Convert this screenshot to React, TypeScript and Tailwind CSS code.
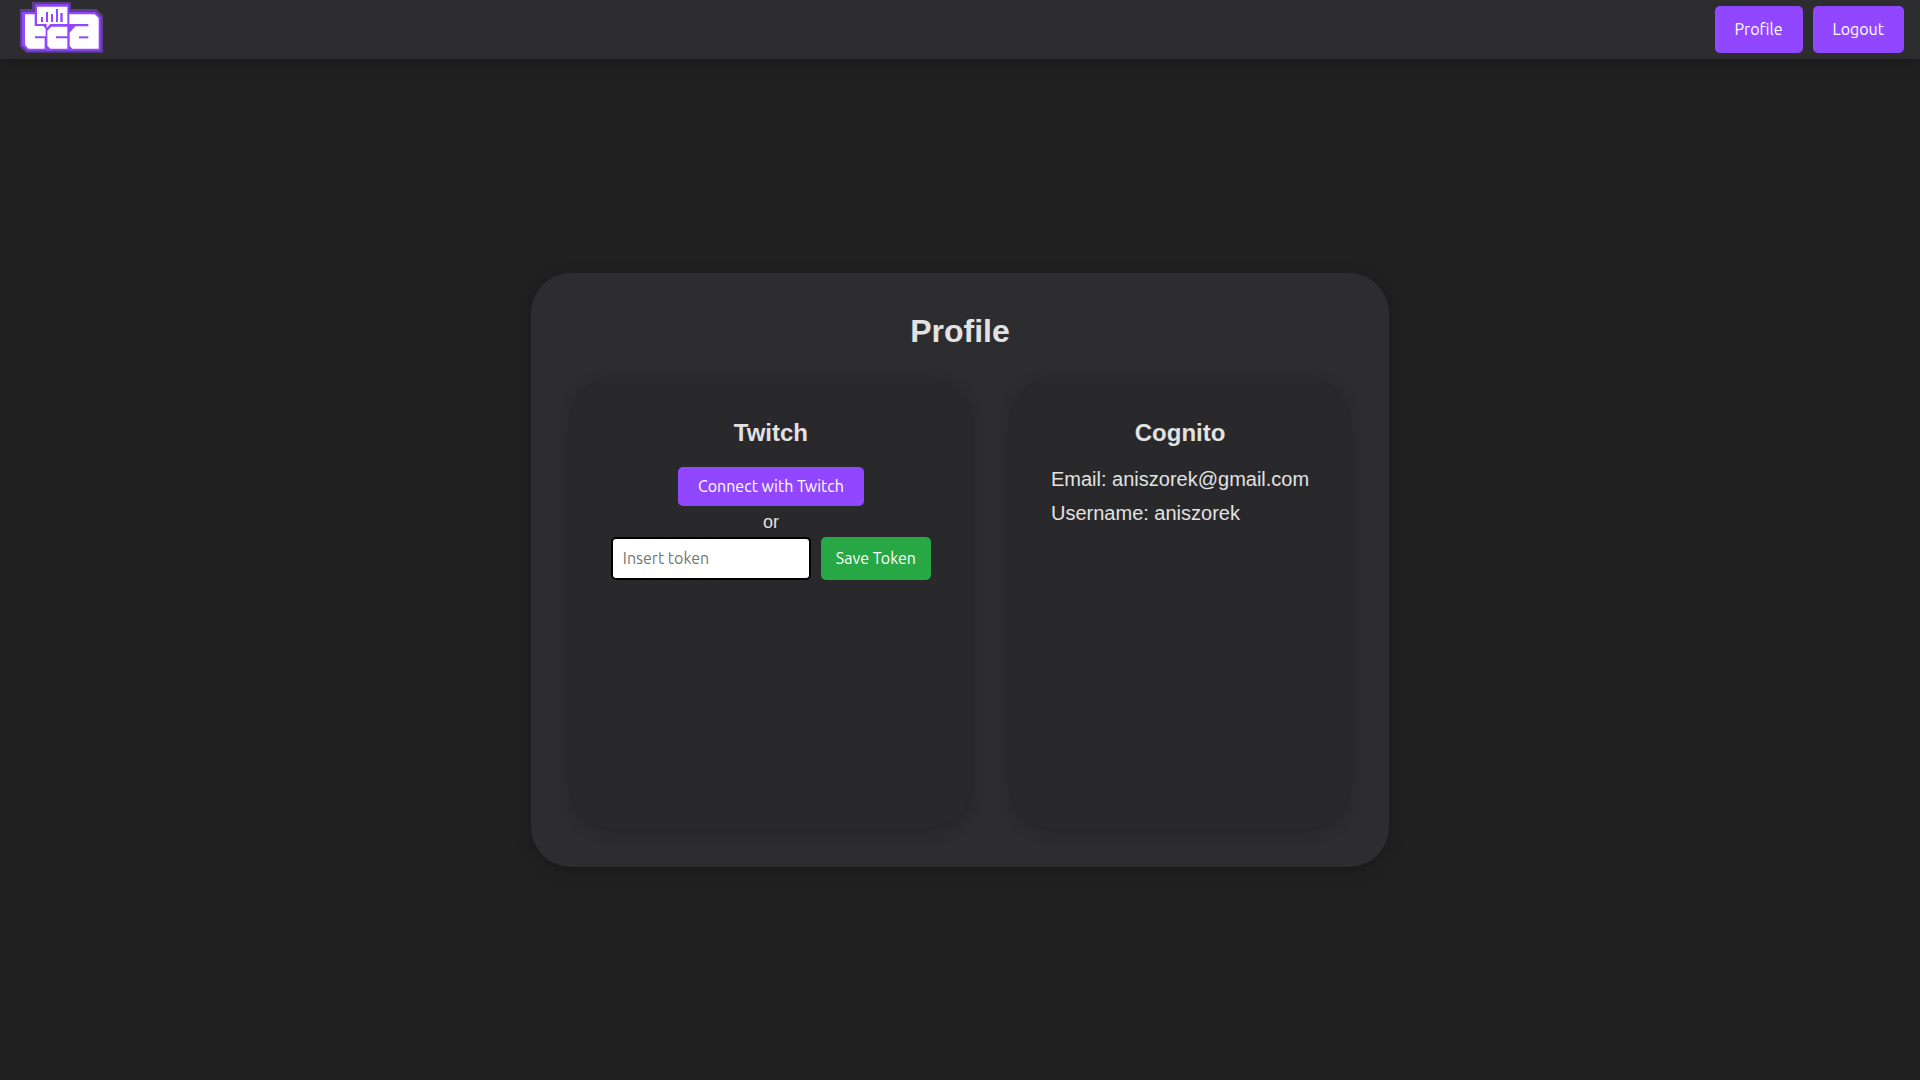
import React from "react";

function Logo() {
  return (
    <svg viewBox="60 6 249 153" className="h-[51px] w-[83px]" role="img" aria-label="tca">
      <path fill="#5c3d8f" d="M60 27H96V6H213V27H290L309 47V158H78L60 140Z" />
      <path fill="#9147ff" d="M66 36H105V13H207V36H286L302 52V152H82L66 136Z" />
      <g fill="#fff">
        <path d="M75 43H104V78H130L137 86V109H105V115H134V146H86L75 135Z" />
        <path d="M154 80H202V109H168V115H202V146H151L142 137V92Z" />
        <path d="M208 43H284L296 55V146H217L209 137V98L226 79H265V72H208Z" />
        <path d="M111 20H202V72H151L140 84V72H111Z" />
      </g>
      <g fill="#9147ff">
        <path d="M237 109H265V115H237Z" />
        <path d="M123 51H129V66H123ZM138 36H144V66H138ZM153 42H159V66H153ZM168 27H174V66H168ZM181 39H188V66H181Z" />
      </g>
    </svg>
  );
}

export default function App() {
  return (
    <div className="flex min-h-screen flex-col bg-[#202020] font-['Liberation_Sans',Arial,sans-serif] text-[#e2e2e2]">
      <header className="flex items-start justify-between bg-[#2d2d2f] pr-4 pl-5 shadow-[0_4px_12px_rgba(0,0,0,0.2)]">
        <a href="#" className="block pt-[2px]">
          <Logo />
        </a>
        <nav className="flex gap-[10px] py-[6px] font-['Ubuntu','Noto_Sans',sans-serif] text-base text-white">
          <button type="button" className="h-[47px] rounded-[5px] bg-[#9147ff] px-5 pb-[2px]">
            Profile
          </button>
          <button type="button" className="h-[47px] rounded-[5px] bg-[#9147ff] px-5 pb-[2px]">
            Logout
          </button>
        </nav>
      </header>

      <main className="flex flex-1 items-center justify-center">
        <section className="flex min-h-[55vh] flex-col rounded-[40px] bg-[#2d2d2f] p-10 shadow-[0_4px_16px_rgba(0,0,0,0.2)]">
          <h1 className="mb-[30px] text-center text-[32px] leading-[36px] font-bold">Profile</h1>
          <div className="flex flex-1 gap-10">
            <section className="flex flex-col items-center rounded-[40px] bg-[#29292b] p-10 shadow-[0_4px_16px_rgba(0,0,0,0.2)]">
              <h2 className="mb-5 text-2xl leading-7 font-bold">Twitch</h2>
              <button
                type="button"
                className="h-[39px] rounded-[5px] bg-[#9147ff] px-5 font-['Ubuntu','Noto_Sans',sans-serif] text-base text-white"
              >
                Connect with Twitch
              </button>
              <span className="pt-[5px] pb-[3px] text-lg leading-[23px]">or</span>
              <form className="flex gap-[10px] font-['Ubuntu','Noto_Sans',sans-serif] text-base">
                <input
                  type="text"
                  aria-label="Insert token"
                  placeholder="Insert token"
                  className="h-[43px] w-[200px] rounded-[5px] border-2 border-black bg-white px-[10px] text-black outline-none placeholder:text-[#757575]"
                />
                <button type="button" className="h-[43px] rounded-[5px] bg-[#28a745] px-[15px] text-white">
                  Save Token
                </button>
              </form>
            </section>
            <section className="flex flex-col rounded-[40px] bg-[#29292b] p-10 shadow-[0_4px_16px_rgba(0,0,0,0.2)]">
              <h2 className="mb-[15px] text-center text-2xl leading-7 font-bold">Cognito</h2>
              <p className="text-xl leading-[34px]">Email: aniszorek@gmail.com</p>
              <p className="text-xl leading-[34px]">Username: aniszorek</p>
            </section>
          </div>
        </section>
      </main>
    </div>
  );
}
